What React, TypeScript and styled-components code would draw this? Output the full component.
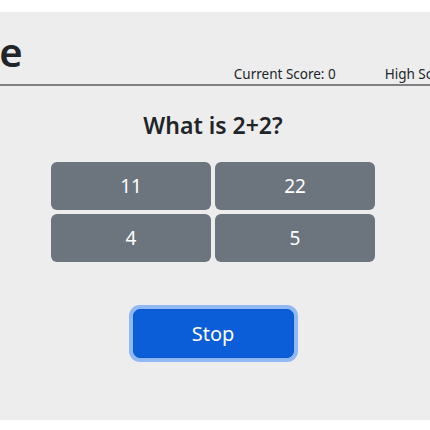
import styled, { createGlobalStyle } from "styled-components";

const GlobalStyle = createGlobalStyle`
html, body {
  margin: 0;
  padding: 0;
  background: #ffffff;
  overflow: hidden;
}
body {
  font-family: "Noto Sans", "Open Sans", sans-serif;
  color: #212529;
}
`
const Panel = styled.div`
margin-top: 12px;
height: 408px;
background-color: #ededed;
overflow: hidden;
display: flex;
flex-direction: column;
`
const Header = styled.header`
height: 72px;
border-bottom: 2px solid #808080;
display: flex;
justify-content: center;
align-items: flex-end;
white-space: nowrap;
`
const Title = styled.h1`
margin: 0 0 8px 0;
font-size: 40px;
font-weight: 600;
line-height: 1.2;
color: #212529;
`
const ScoreBar = styled.div`
display: flex;
gap: 49px;
margin-left: 211px;
padding-right: 166px;
`
const Score = styled.span`
font-size: 13.5px;
line-height: 1.5;
color: #212529;
`
const Body = styled.main`
display: flex;
flex-direction: column;
align-items: center;
padding-right: 4px;
`
const Question = styled.h2`
margin: 26px 0 0 0;
font-size: 23px;
font-weight: 600;
line-height: 1.2;
color: #212529;
`
const Answers = styled.div`
display: grid;
grid-template-columns: 160px 160px;
gap: 4px;
margin-top: 22px;
`
const AnswerButton = styled.button`
height: 48px;
border: none;
border-radius: 6px;
background-color: #6c757d;
color: #ffffff;
font-family: inherit;
font-size: 19px;
`
const StopButton = styled.button`
margin-top: 47px;
width: 161px;
height: 49px;
border: 1px solid #0a58ca;
border-radius: 7px;
background-color: #0b5ed7;
color: #ffffff;
font-family: inherit;
font-size: 20px;
box-shadow: 0 0 0 4px rgba(49, 132, 253, 0.5);
`

const answers = ["11", "22", "4", "5"];

export default function App() {
    return (
        <>
          <GlobalStyle />
          <Panel>
            <Header>
              <Title>Math Game</Title>
              <ScoreBar>
                <Score>Current Score: 0</Score>
                <Score>High Score: 0</Score>
              </ScoreBar>
            </Header>
            <Body>
              <Question>What is 2+2?</Question>
              <Answers>
                {answers.map((a) => (
                  <AnswerButton key={a}>{a}</AnswerButton>
                ))}
              </Answers>
              <StopButton>Stop</StopButton>
            </Body>
          </Panel>
        </>
    )
}
